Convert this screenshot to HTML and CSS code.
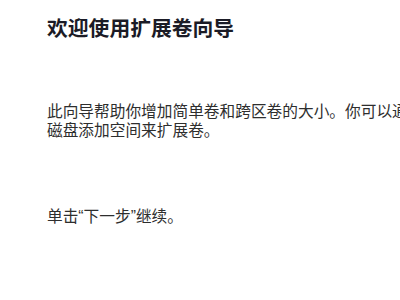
FILE: index.html
```html
<!DOCTYPE html>
<html lang="zh-CN">
<head>
<meta charset="utf-8">
<title>扩展卷向导</title>
<link rel="stylesheet" href="styles.css">
</head>
<body>
<main class="wizard">
  <h1 class="wizard-title">欢迎使用扩展卷向导</h1>
  <p class="wizard-text">此向导帮助你增加简单卷和跨区卷的大小。你可以通过从一个或多个磁盘添加空间来扩展卷。</p>
  <p class="wizard-text wizard-next">单击“下一步”继续。</p>
</main>
</body>
</html>
```

FILE: styles.css
```css
html, body {
  margin: 0;
  padding: 0;
  background: #ffffff;
  overflow: hidden;
}

body {
  width: 400px;
  height: 300px;
  font-family: "Liberation Sans", "Noto Sans CJK SC", sans-serif;
}

.wizard {
  display: flex;
  flex-direction: column;
  padding: 14px 0 0 47px;
  width: 500px;
}

.wizard-title {
  margin: 0;
  font-family: "Noto Sans CJK SC", sans-serif;
  font-size: 20.8px;
  line-height: 26px;
  font-weight: 700;
  color: #1b1b26;
}

.wizard-text {
  margin: 0;
  font-size: 15.7px;
  line-height: 19px;
  color: #2e2e2e;
  width: 476px;
}

.wizard-title + .wizard-text {
  margin-top: 62px;
}

.wizard-next {
  margin-top: 67px;
}
```
